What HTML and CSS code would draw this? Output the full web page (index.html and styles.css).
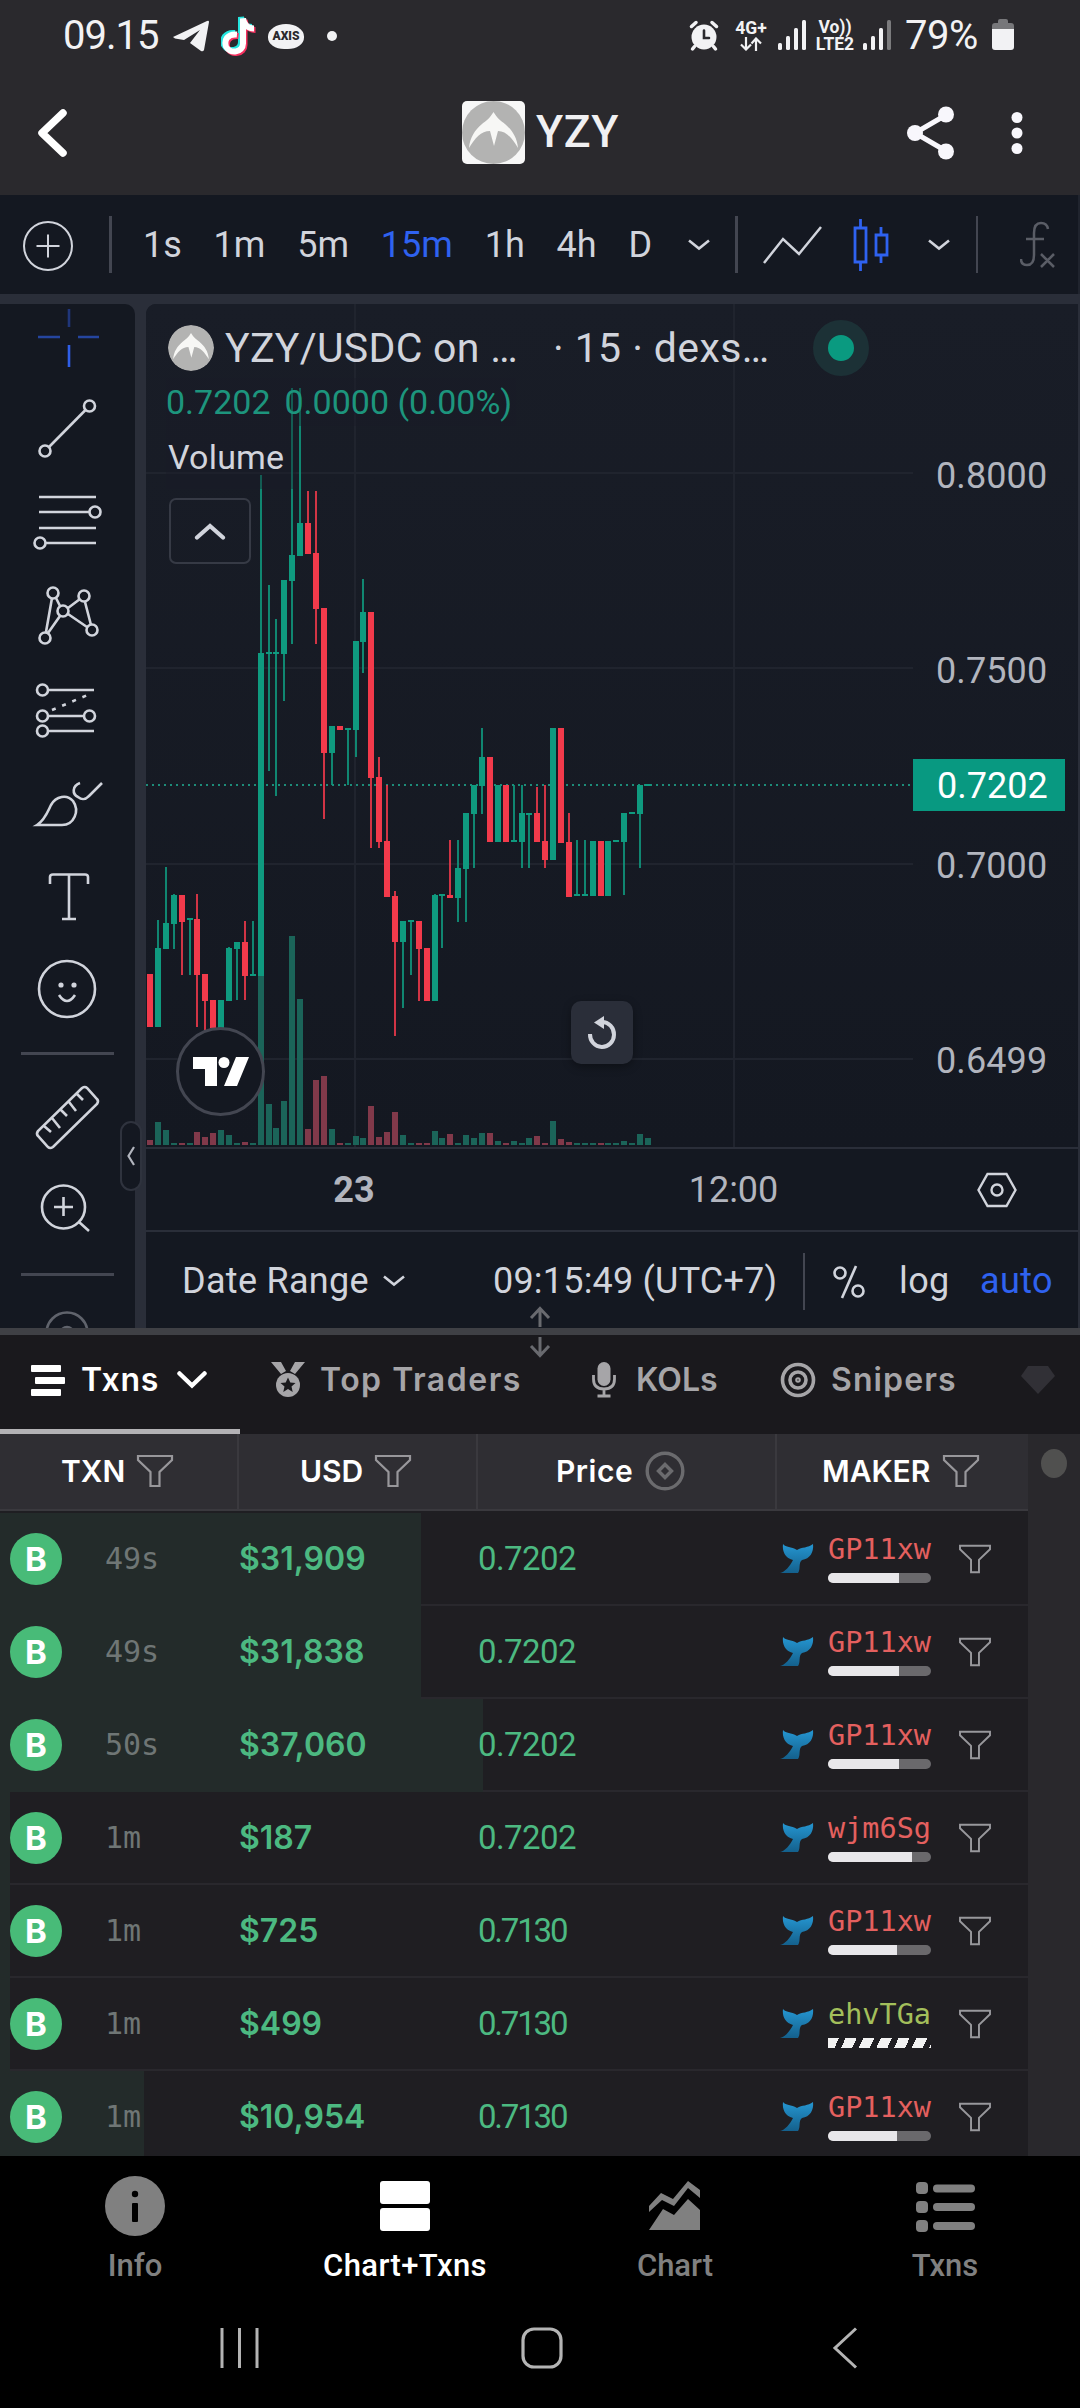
FILE: index.html
```html
<!DOCTYPE html>
<html lang="en">

<head>
    <meta charset="UTF-8">
    <meta name="viewport" content="width=device-width, initial-scale=1.0">
    <title>YZY</title>
    <link rel="stylesheet" href="styles.css">
</head>

<body>
    <!-- shared icons -->
    <svg class="defs" width="0" height="0">
        <symbol id="funnel" viewBox="0 0 38 34">
            <path d="M2 2h34v4L23.500 18v14h-9V18L2 6z" fill="none" stroke="currentColor" stroke-width="2.200" />
        </symbol>
        <symbol id="whale" viewBox="0 0 34 29">
            <path d="M3 0C6 4 11 2 17 6C22 3 28 4 33 0C34 8 30 15 22 16C18 19 21 25 18 29H0C5 28 10 22 13 16C5 14 2 7 3 0z" fill="url(#sea)" />
        </symbol>
        <symbol id="down" viewBox="0 0 22 12">
            <path d="M1 1.500L11 9.500L21 1.500" fill="none" stroke="currentColor" stroke-width="2.600" />
        </symbol>
        <symbol id="coin" viewBox="0 0 63 63">
            <circle cx="31.500" cy="31.500" r="31.500" fill="#b3b3b2" />
            <path d="M31.500 11C35 17 39 20 43 23C50 29 55 36 56 47C50 37 44 30 36 30L32 45L28 30C19 30 13 37 7 47C8 36 13 29 20 23C24 20 28 17 31.500 11z" fill="#f7f7f5" />
        </symbol>
        <linearGradient id="sea" x1="0" y1="0" x2="0" y2="1">
            <stop offset="0" stop-color="#2596d1" />
            <stop offset="1" stop-color="#14608c" />
        </linearGradient>
    </svg>

    <div class="status">
        <span class="clock">09.15</span>
        <svg class="tg" width="36" height="32" viewBox="0 0 36 32"><path d="M0 17L34 1Q36 0 36 2L31 30Q30 32 28 31L17 23L27 10L11 20L2 18.500z" fill="#f2f2f4" /></svg>
        <svg class="tiktok" width="36" height="40" viewBox="0 0 36 40" fill="none" stroke-width="6">
            <path d="M15 18C5 17 2 24 4 30C8 38 21 36 21 27V2C22 9 27 12 32 12" stroke="#25e5df" transform="translate(-1 -1)" />
            <path d="M15 18C5 17 2 24 4 30C8 38 21 36 21 27V2C22 9 27 12 32 12" stroke="#f5305f" transform="translate(2.500 2)" />
            <path d="M15 18C5 17 2 24 4 30C8 38 21 36 21 27V2C22 9 27 12 32 12" stroke="#fff" transform="translate(1 .5)" />
        </svg>
        <span class="bubble">AXIS</span>
        <i class="dot"></i>
        <svg class="alarm" width="30" height="32" viewBox="0 0 30 32" stroke="#f2f2f4" stroke-width="3.500" stroke-linecap="round">
            <circle cx="15" cy="17" r="12.500" fill="#f2f2f4" stroke="none" />
            <path d="M2.500 6.500L7 2.500M27.500 6.500L23 2.500M5.500 26.500L3.500 29M24.500 26.500L26.500 29" />
            <path d="M15 10.500V18H20" fill="none" stroke="#2a292d" stroke-width="2.600" />
        </svg>
        <span class="net net-4g">4G+
            <svg width="22" height="14" viewBox="0 0 22 14" fill="none" stroke="#f2f2f4" stroke-width="2.200"><path d="M6 0V12M1 7.500L6 12.500L11 7.500M16 14V2M11.500 6.500L16 1.500L21 6.500" /></svg>
        </span>
        <svg class="bars" width="29" height="30" viewBox="0 0 29 30" fill="#f2f2f4"><rect y="23" width="4" height="7" rx="1.500" /><rect x="8" y="16" width="4" height="14" rx="1.500" /><rect x="16" y="8" width="4" height="22" rx="1.500" /><rect x="24" y="0" width="4" height="30" rx="1.500" /></svg>
        <span class="net net-lte"><span>Vo))</span><span>LTE2</span></span>
        <svg class="bars" width="29" height="30" viewBox="0 0 29 30" fill="#f2f2f4"><rect y="23" width="4" height="7" rx="1.500" /><rect x="8" y="16" width="4" height="14" rx="1.500" /><rect x="16" y="8" width="4" height="22" rx="1.500" /><rect x="24" y="0" width="4" height="30" rx="1.500" fill="#7b7b7d" /></svg>
        <span class="percent">79%</span>
        <svg class="battery" width="22" height="32" viewBox="0 0 22 32"><path d="M0 11V7Q0 4 3 4H6V2Q6 0 8 0H14Q16 0 16 2V4H19Q22 4 22 7V11z" fill="#77777a" /><path d="M0 10H22V28Q22 31 19 31H3Q0 31 0 28z" fill="#f2f2f4" /></svg>
    </div>

    <header class="topbar">
        <svg class="back" width="32" height="50" viewBox="0 0 32 50"><path d="M27 5L6 25L27 45" fill="none" stroke="#fff" stroke-width="7.500" stroke-linecap="round" stroke-linejoin="round" /></svg>
        <div class="token">
            <svg width="63" height="63"><use href="#coin" /></svg>
            <h1>YZY</h1>
        </div>
        <svg class="share" width="48" height="54" viewBox="0 0 48 54"><path d="M39 9L8 27L39 45" fill="none" stroke="#f8f7fc" stroke-width="5" /><g fill="#f8f7fc"><circle cx="39" cy="8.500" r="8" /><circle cx="8" cy="27" r="8" /><circle cx="39" cy="45.500" r="8" /></g></svg>
        <svg class="more" width="12" height="44" viewBox="0 0 12 44" fill="#f8f7fc"><circle cx="6" cy="6.500" r="5.500" /><circle cx="6" cy="22" r="5.500" /><circle cx="6" cy="37.500" r="5.500" /></svg>
    </header>

    <nav class="toolbar">
        <svg class="plus" width="50" height="50" viewBox="0 0 50 50" fill="none" stroke="#d1d4dc" stroke-width="2"><circle cx="25" cy="25" r="24" /><path d="M13.500 25H36.500M25 13.500V36.500" /></svg>
        <i class="sep sep-a"></i>
        <div class="intervals">
            <span>1s</span>
            <span>1m</span>
            <span>5m</span>
            <span class="on">15m</span>
            <span>1h</span>
            <span>4h</span>
            <span>D</span>
        </div>
        <svg class="chev" width="22" height="12"><use href="#down" /></svg>
        <i class="sep sep-b"></i>
        <svg class="line-type" width="60" height="40" viewBox="0 0 60 40"><path d="M2 38L21 14L37 29L59 2" fill="none" stroke="#d1d4dc" stroke-width="2.500" /></svg>
        <svg class="candle-type" width="36" height="54" viewBox="0 0 36 54" fill="none" stroke="#2f62f0" stroke-width="2.800"><path d="M7.500 1V10M7.500 45V53M28 9V17M28 37V45" /><path d="M2 10H13V44H2zM23 17H34V37H23z" /></svg>
        <svg class="chev" width="22" height="12"><use href="#down" /></svg>
        <i class="sep sep-c"></i>
        <svg class="fx" width="36" height="48" viewBox="0 0 36 48" fill="none" stroke="#5a5d66" stroke-width="2.500"><path d="M28 8Q27 2 21 2Q14 2 14 12V34Q14 44 7 44Q1 44 1 38M6 18H24M21 33L34 46M34 33L21 46" /></svg>
    </nav>

    <main class="workspace">
        <aside class="tools">
            <svg class="cross" width="135" height="93" viewBox="0 290 135 93"><path class="mid" d="M38 337H60M78 337H99" /><path class="low" d="M69 309V327" /><path d="M69 345V367" /></svg>
            <svg width="135" height="93" viewBox="0 383 135 93"><path d="M49 447L85.500 410" /><circle cx="89.500" cy="406" r="5.500" /><circle cx="45" cy="451" r="5.500" /></svg>
            <svg width="135" height="93" viewBox="0 476 135 93"><path d="M39 497H96M39 512H89M39 528H96M46 543H96" /><circle cx="95" cy="512" r="5.500" /><circle cx="40" cy="543" r="5.500" /></svg>
            <svg width="135" height="93" viewBox="0 569 135 93"><path d="M52 598L46 632M48 633L60 616M56 598L60 606M68 608L80 599M85 602L91 625M68 614L87 627" /><circle cx="53" cy="593" r="5.500" /><circle cx="84" cy="596" r="5.500" /><circle cx="63" cy="611" r="5.500" /><circle cx="45" cy="638" r="5.500" /><circle cx="92" cy="630" r="5.500" /></svg>
            <svg width="135" height="93" viewBox="0 662 135 93"><path d="M48 690H94M48 716H84M48 731H94" /><path d="M52 710L90 694" stroke-dasharray="4 7" /><circle cx="42.500" cy="690" r="5.500" /><circle cx="42.500" cy="716" r="5.500" /><circle cx="89.500" cy="716" r="5.500" /><circle cx="42.500" cy="731" r="5.500" /></svg>
            <svg width="135" height="93" viewBox="0 755 135 93"><path d="M37 825C45 820 48 811 51 805C56 796 67 794 73 801C80 811 74 825 62 825zM80 783C72 786 72 794 78 797C83 801 86 799 89 796L102 783" /></svg>
            <svg width="135" height="93" viewBox="0 848 135 93"><path d="M50 884V877Q50 874.500 53 874.500H85Q88 874.500 88 877V884M69 875V919M62 919H76" /></svg>
            <svg width="135" height="93" viewBox="0 941 135 93"><circle cx="67" cy="989" r="28" /><path d="M59 995Q67 1007 75 995" /><g class="fill"><circle cx="61" cy="985" r="2.600" /><circle cx="74" cy="985" r="2.600" /></g></svg>
            <i class="rule"></i>
            <svg width="135" height="90" viewBox="0 1072 135 90"><path d="M38 1131Q36 1134 38 1136L48 1147Q50 1149 53 1147L97 1104Q99 1101 97 1099L87 1088Q85 1086 82 1088zM44 1126L51 1132M52 1118L60 1128M61 1110L67 1116M69 1102L76 1111M77 1094L83 1100" /></svg>
            <svg width="135" height="90" viewBox="0 1162 135 90"><circle cx="63.500" cy="1207" r="21.500" /><path d="M54 1207H73M63.500 1197V1216M79 1222L89 1231" /></svg>
            <i class="rule rule-2"></i>
            <svg class="dim" width="135" height="52" viewBox="0 1276 135 52"><circle cx="67" cy="1333" r="20.500" /><circle cx="67" cy="1333" r="6" /></svg>
        </aside>
        <div class="tools-toggle"><svg width="8" height="20" viewBox="0 0 8 20"><path d="M7 1L1.500 10L7 19" fill="none" stroke="#b2b5be" stroke-width="2.200" /></svg></div>

        <section class="chart">
            <div class="pane">
                <div class="plot">
                    <svg id="candles" width="767" height="843" viewBox="146 304 767 843"></svg>
                    <div class="legend">
                        <div class="pair">
                            <svg width="46" height="46"><use href="#coin" /></svg>
                            <span class="pair-name">YZY/USDC on …</span>
                            <span class="pair-src">· 15 · dexs…</span>
                            <i class="live"></i>
                        </div>
                        <div class="ohlc"><span>0.7202</span><span>0.0000 (0.00%)</span></div>
                        <div class="vol">Volume</div>
                        <div class="fold"><svg width="32" height="18" viewBox="0 0 32 18"><path d="M3 15.500L16 4L29 15.500" fill="none" stroke="#d1d4dc" stroke-width="4.200" stroke-linecap="round" /></svg></div>
                    </div>
                    <div class="tv"><svg width="56" height="30" viewBox="0 0 56 30" fill="#fff"><path d="M0 0H24V29H12V12H0zM43 0H56L44 29H31z" /><circle cx="31" cy="5.500" r="5.500" /></svg></div>
                    <div class="reset"><svg width="30" height="34" viewBox="0 0 30 34"><path d="M3 18A12 12.500 0 1 0 15 6" fill="none" stroke="#d1d4dc" stroke-width="4" /><path d="M17 0V13L7 6.500z" fill="#d1d4dc" /></svg></div>
                </div>
                <div class="price-axis">
                    <span>0.8000</span>
                    <span>0.7500</span>
                    <span>0.7000</span>
                    <span>0.6499</span>
                    <b class="last">0.7202</b>
                </div>
            </div>
            <div class="time-axis">
                <b>23</b>
                <span>12:00</span>
                <svg width="40" height="36" viewBox="0 0 40 36" fill="none" stroke="#d1d4dc" stroke-width="2.400"><path d="M10.500 2H29.500L38.500 18L29.500 34H10.500L1.500 18z" /><circle cx="20" cy="18" r="5.500" /></svg>
            </div>
            <div class="chart-foot">
                <span class="range">Date Range</span>
                <svg width="22" height="12"><use href="#down" /></svg>
                <span class="utc">09:15:49 (UTC+7)</span>
                <i class="sep"></i>
                <svg class="pct" width="32" height="34" viewBox="0 0 32 34" fill="none" stroke="#d1d4dc" stroke-width="2.600"><circle cx="7" cy="8" r="5.500" /><circle cx="25" cy="26" r="5.500" /><path d="M23 1L9 33" /></svg>
                <span class="log">log</span>
                <span class="auto">auto</span>
            </div>
        </section>
    </main>

    <div class="splitter">
        <svg width="22" height="52" viewBox="0 0 22 52" fill="none" stroke="#696a6f" stroke-width="3"><path d="M11 21V2M2 12L11 2.500L20 12M11 31V50M2 40L11 49.500L20 40" /></svg>
    </div>

    <nav class="tabs">
        <div class="tab active">
            <svg width="34" height="31" viewBox="0 0 34 31" fill="#fff"><rect width="30" height="7" rx="1" /><rect x="4" y="12" width="30" height="7" rx="1" /><rect y="24" width="30" height="7" rx="1" /></svg>
            <span>Txns</span>
            <svg class="tab-chev" width="30" height="20" viewBox="0 0 30 20"><path d="M2.500 3.500L15 15.500L27.500 3.500" fill="none" stroke="#fff" stroke-width="4.500" stroke-linecap="round" /></svg>
        </div>
        <div class="tab t-top">
            <svg width="34" height="36" viewBox="0 0 34 36" fill="#a6a5a8"><path d="M0 0H10L15 9L10 12zM34 0H24L19 9L24 12z" /><circle cx="17" cy="23" r="12" /><path d="M17 15.500L19.300 20.500L24.500 21L20.500 24.500L21.700 30L17 27L12.300 30L13.500 24.500L9.500 21L14.700 20.500z" fill="#1a191d" /></svg>
            <span>Top Traders</span>
        </div>
        <div class="tab t-kol">
            <svg width="24" height="36" viewBox="0 0 24 36"><rect x="5.500" width="13" height="24" rx="6.500" fill="#a6a5a8" /><path d="M1.500 13V17Q1.500 27 12 27Q22.500 27 22.500 17V13M12 27V33M5.500 34H18.500" fill="none" stroke="#a6a5a8" stroke-width="2.800" /></svg>
            <span>KOLs</span>
        </div>
        <div class="tab t-snipe">
            <svg width="36" height="36" viewBox="0 0 36 36" fill="none" stroke="#a6a5a8" stroke-width="3.600"><circle cx="18" cy="18" r="15.500" /><circle cx="18" cy="18" r="8" /><circle cx="18" cy="18" r="1" /></svg>
            <span>Snipers</span>
        </div>
        <svg class="gem" width="34" height="28" viewBox="0 0 34 28"><path d="M7 0H27L34 10L17 28L0 10z" fill="#313036" /></svg>
    </nav>

    <section class="txns">
        <div class="table">
            <div class="thead">
                <div>TXN<svg width="38" height="34"><use href="#funnel" /></svg></div>
                <div class="h-usd">USD<svg width="38" height="34"><use href="#funnel" /></svg></div>
                <div class="h-price">Price<svg width="40" height="40" viewBox="0 0 40 40" fill="none" stroke="#6b6b6e" stroke-width="3.400"><circle cx="20" cy="20" r="17.800" /><path d="M20 13.500L26.500 20L20 26.500L13.500 20z" /></svg></div>
                <div class="h-maker">MAKER<svg width="38" height="34"><use href="#funnel" /></svg></div>
            </div>
            <div id="rows"></div>
        </div>
        <div class="scroll"><i></i></div>
    </section>

    <footer class="bottom-nav">
        <div>
            <svg width="60" height="60" viewBox="0 0 60 60"><circle cx="30" cy="30" r="30" fill="#808080" /><g fill="#000"><circle cx="30" cy="18" r="3.200" /><rect x="27" y="27" width="6" height="19" rx="1" /></g></svg>
            <span>Info</span>
        </div>
        <div class="current">
            <svg width="60" height="60" viewBox="0 0 60 60" fill="#fff"><rect x="5" y="5" width="50" height="23" rx="3" /><rect x="5" y="32" width="50" height="23" rx="3" /></svg>
            <span>Chart+Txns</span>
        </div>
        <div>
            <svg width="60" height="60" viewBox="0 0 60 60" fill="#808080"><path d="M4 30L16 17L28 23L43 5L55 14V22L43 12L29 30L17 24L4 36zM4 54L18 33L29 39L43 23L55 34V54z" /></svg>
            <span>Chart</span>
        </div>
        <div>
            <svg width="60" height="60" viewBox="0 0 60 60" fill="#808080"><rect x="1" y="6" width="12" height="12" rx="4" /><rect x="1" y="25" width="12" height="12" rx="4" /><rect x="1" y="44" width="12" height="12" rx="4" /><rect x="18" y="8.500" width="42" height="8" rx="4" /><rect x="18" y="27" width="42" height="8" rx="4" /><rect x="18" y="46" width="42" height="8" rx="4" /></svg>
            <span>Txns</span>
        </div>
    </footer>

    <div class="sys-nav">
        <svg width="40" height="42" viewBox="0 0 40 42" stroke="#b4b4b4" stroke-width="3"><path d="M3 1V41M20.500 1V41M38 1V41" /></svg>
        <svg width="42" height="42" viewBox="0 0 42 42"><rect x="2" y="2" width="38" height="38" rx="11" fill="none" stroke="#b4b4b4" stroke-width="3.200" /></svg>
        <svg width="26" height="42" viewBox="0 0 26 42"><path d="M24 1.500L3 21L24 40.500" fill="none" stroke="#b4b4b4" stroke-width="3" /></svg>
    </div>

    <script src="script.js"></script>
</body>

</html>
```
FILE: styles.css
```css
* {
    box-sizing: border-box;
}

body {
    margin: 0;
    width: 1080px;
    height: 2408px;
    overflow: hidden;
    background-color: #000;
    color: #d1d4dc;
    font-family: Roboto, "Liberation Sans", sans-serif;
    font-size: 36px;
    line-height: 1;
}

svg {
    display: block;
    flex: none;
}

span, b {
    white-space: nowrap;
}

.defs {
    position: absolute;
}

/* status bar */
.status {
    display: flex;
    align-items: center;
    height: 72px;
    padding-left: 63px;
    background-color: #2a292d;
    color: #f2f2f4;
}

.clock {
    width: 110px;
    font-size: 40px;
    letter-spacing: -1px;
}

.tiktok {
    margin-left: 12px;
}

.bubble {
    width: 36px;
    height: 25px;
    margin-left: 11px;
    border-radius: 50% 50% 45% 45%;
    background-color: #f2f2f4;
    color: #2a292d;
    font-size: 12px;
    font-weight: 900;
    line-height: 25px;
    text-align: center;
}

.dot {
    width: 10px;
    height: 10px;
    margin-left: 23px;
    border-radius: 50%;
    background-color: #f2f2f4;
}

.alarm {
    margin-left: 352px;
}

.net {
    display: flex;
    flex-direction: column;
    align-items: center;
    font-size: 17.500px;
    font-weight: 700;
    line-height: 15px;
}

.net-4g {
    width: 32px;
    margin-left: 16px;
    gap: 1px;
}

.net-lte {
    width: 42px;
    margin: 0 7px;
    gap: 2px;
}

.bars {
    margin-top: -2px;
}

.net-4g + .bars {
    margin-left: 11px;
}

.percent {
    width: 87px;
    margin-left: 13px;
    font-size: 40px;
    letter-spacing: -.5px;
}

.battery {
    margin-top: -2px;
}

/* token header */
.topbar {
    display: flex;
    align-items: center;
    height: 123px;
    padding: 0 57px 0 36px;
    background-color: #2a292d;
}

.topbar > svg {
    margin-top: -1px;
}

.token {
    display: flex;
    align-items: center;
    gap: 11px;
    margin-left: 394px;
    padding-bottom: 2px;
}

.token svg {
    border-radius: 5px;
    background-color: #f7f7f7;
}

.token h1 {
    margin: 0;
    font-size: 44.500px;
    font-weight: 500;
    letter-spacing: .6px;
    color: #f0f0f2;
}

.share {
    margin-left: auto;
    margin-right: 56px;
}

/* interval toolbar */
.toolbar {
    display: flex;
    align-items: center;
    height: 99px;
    padding-left: 23px;
    background-color: #141821;
    border-right: 2px solid #20242e;
}

.plus {
    margin-top: 3px;
}

.sep {
    flex: none;
    width: 3px;
    height: 57px;
    background-color: #434651;
}

.sep-a {
    margin: 0 31px 0 36px;
}

.intervals {
    display: flex;
    gap: 31.800px;
    width: 545px;
}

.intervals .on {
    color: #2f62f0;
}

.sep-b {
    margin: 0 24px 0 25px;
}

.candle-type {
    margin: 0 39px 0 31px;
}

.sep-c {
    width: 2px;
    margin: 0 42px 0 26px;
}

/* chart workspace */
.workspace {
    position: relative;
    display: flex;
    height: 1034px;
    padding: 10px 2px 0 0;
    gap: 11px;
    background-color: #2a2e39;
}

.tools {
    flex: none;
    width: 135px;
    overflow: hidden;
    border-radius: 0 10px 0 0;
    background-color: #141821;
}

.tools svg {
    fill: none;
    stroke: #d1d4dc;
    stroke-width: 2.600;
}

.tools svg:first-child {
    margin-top: -14px;
}

.tools .cross {
    stroke: #2f5fe8;
}

.cross .mid {
    stroke: #25459f;
}

.cross .low {
    stroke: #20367a;
}

.tools .fill {
    fill: #d1d4dc;
    stroke: none;
}

.tools .dim {
    opacity: .4;
}

.rule {
    display: block;
    width: 93px;
    height: 3px;
    margin: 18px 0 17px 21px;
    background-color: #434651;
}

.rule-2 {
    margin: 21px 0 0 21px;
}

.tools-toggle {
    position: absolute;
    left: 120px;
    top: 827px;
    display: flex;
    align-items: center;
    justify-content: center;
    width: 22px;
    height: 70px;
    border: 2px solid #2f333e;
    border-radius: 11px;
    background-color: #141821;
}

.chart {
    display: flex;
    flex-direction: column;
    width: 932px;
    border-radius: 10px 0 0 0;
    overflow: hidden;
    background-color: #141821;
}

.pane {
    display: flex;
    height: 843px;
    background: linear-gradient(#191d27, #141821);
}

.plot {
    position: relative;
    width: 767px;
}

.legend {
    position: absolute;
    left: 0;
    top: 0;
    padding: 14px 0 0 20px;
}

.pair {
    display: flex;
    align-items: center;
    height: 60px;
    padding-left: 2px;
    font-size: 41px;
}

.pair svg {
    border-radius: 50%;
}

.pair-name {
    width: 328px;
    margin-left: 11px;
    letter-spacing: .3px;
}

.pair-src {
    width: 228px;
    letter-spacing: .4px;
}

.live {
    width: 56px;
    height: 56px;
    margin-left: 32px;
    border: 15px solid #1c3136;
    border-radius: 50%;
    background-color: #0a9a80;
}

.ohlc {
    display: flex;
    align-items: center;
    gap: 14px;
    width: 350px;
    height: 48px;
    font-size: 34px;
    color: #1d957d;
    background-color: rgba(24, 28, 39, .4);
}

.vol {
    display: flex;
    align-items: center;
    width: 130px;
    height: 63px;
    padding: 0 0 1px 2px;
    font-size: 34px;
    letter-spacing: .2px;
    background-color: rgba(24, 28, 39, .4);
}

.fold {
    display: flex;
    align-items: center;
    justify-content: center;
    width: 82px;
    height: 66px;
    margin: 9px 0 0 3px;
    border: 2px solid #363a45;
    border-radius: 7px;
}

.tv {
    position: absolute;
    left: 30px;
    top: 723px;
    display: flex;
    align-items: center;
    justify-content: center;
    width: 89px;
    height: 89px;
    border: 3px solid #434651;
    border-radius: 50%;
    background-color: #141821;
}

.reset {
    position: absolute;
    left: 425px;
    top: 697px;
    display: flex;
    align-items: center;
    justify-content: center;
    width: 62px;
    height: 63px;
    border-radius: 10px;
    background-color: #2a2e39;
    box-shadow: 0 3px 8px rgba(0, 0, 0, .35);
}

.price-axis {
    position: relative;
    display: flex;
    flex-direction: column;
    width: 165px;
    padding-top: 74px;
    color: #b2b5be;
}

.price-axis span {
    height: 195px;
    padding-left: 23px;
    line-height: 196px;
    letter-spacing: .1px;
}

.last {
    position: absolute;
    left: 0;
    top: 455px;
    width: 152px;
    height: 52px;
    padding-left: 24px;
    background-color: #089981;
    color: #fff;
    font-weight: 400;
    line-height: 54px;
}

.time-axis {
    display: flex;
    align-items: center;
    height: 83px;
    border-top: 2px solid #2a2e39;
    color: #b2b5be;
    text-align: center;
}

.time-axis b {
    width: 416px;
}

.time-axis span {
    width: 343px;
}

.time-axis svg {
    margin: 1px 0 0 72px;
}

.chart-foot {
    display: flex;
    align-items: center;
    flex: 1;
    padding: 2px 0 0 36px;
    border-top: 2px solid #2a2e39;
}

.range {
    width: 201px;
    letter-spacing: .3px;
}

.utc {
    width: 398px;
    padding-left: 88px;
    letter-spacing: .2px;
}

.chart-foot .sep {
    width: 2px;
}

.pct {
    margin: 1px 34px 0 28px;
}

.log {
    width: 81px;
    letter-spacing: .4px;
}

.auto {
    color: #2f62f0;
    letter-spacing: .4px;
}

.splitter {
    position: relative;
    height: 7px;
    background-color: #3f4045;
}

.splitter svg {
    position: absolute;
    left: 529px;
    top: -22px;
}

/* tabs */
.tabs {
    display: flex;
    height: 99px;
    background-color: #1a191d;
    color: #a6a5a8;
    font-family: Inter, "Open Sans", sans-serif;
    font-size: 32px;
    font-weight: 600;
}

.tab {
    display: flex;
    align-items: center;
    height: 99px;
    padding-bottom: 9px;
}

.active {
    width: 240px;
    padding: 0 0 4px 31px;
    border-bottom: 5px solid #b3b2b5;
    color: #fff;
}

.active span {
    width: 96px;
    margin-left: 16px;
    letter-spacing: .7px;
}

.t-top {
    width: 352px;
    padding-left: 31px;
}

.t-top span {
    margin-left: 15px;
    letter-spacing: 1.500px;
}

.t-kol {
    width: 188px;
}

.t-kol span {
    margin-left: 20px;
}

.t-snipe {
    width: 241px;
}

.t-snipe span {
    margin-left: 15px;
    letter-spacing: 1.100px;
}

.gem {
    margin-top: 31px;
}

/* transactions table */
.txns {
    display: flex;
    height: 722px;
    overflow: hidden;
    background-color: #29282c;
}

.table {
    flex: none;
    width: 1028px;
    background-color: #1f1e22;
    font-family: Inter, "Open Sans", sans-serif;
}

.thead {
    display: grid;
    grid-template-columns: 239px 239px 299px 251px;
    height: 77px;
    background-color: #2f2e33;
    border-bottom: 2px solid #3a393e;
    color: #fff;
    font-size: 30px;
    font-weight: 600;
}

.thead div {
    display: flex;
    align-items: center;
    padding: 0 0 2px 61px;
    gap: 11px;
    border-right: 2px solid #3a393e;
}

.thead div:last-child {
    border-right: 0;
}

.thead svg {
    color: #98979b;
}

.thead .h-price {
    padding-left: 78px;
    gap: 12px;
    letter-spacing: .5px;
}

.thead .h-maker {
    padding-left: 45px;
    gap: 12px;
}

.row {
    position: relative;
    display: grid;
    grid-template-columns: 105px 133px 240px 302px 48px 104px 1fr;
    align-items: center;
    height: 93px;
    border-bottom: 2px solid #29282d;
    color: #4cb981;
}

.row:first-child {
    height: 95px;
    padding-top: 2px;
}

/* trade size fill behind the row */
.fill-bar {
    position: absolute;
    left: 0;
    top: 0;
    height: 93px;
    background-color: #232b2a;
}

.row:first-child .fill-bar {
    top: 2px;
}

.row > * {
    position: relative;
}

.row > .fill-bar {
    position: absolute;
}

.side {
    width: 52px;
    height: 52px;
    margin-left: 10px;
    border-radius: 50%;
    background-color: #48bb78;
    color: #fff;
    font-size: 33px;
    font-weight: 700;
    line-height: 52px;
    text-align: center;
}

.age, .maker {
    font-family: "DejaVu Sans Mono", monospace;
}

.age {
    font-size: 30px;
    color: #6f7675;
}

.usd {
    font-size: 32px;
    font-weight: 600;
    padding-left: 1px;
}

.price {
    font-family: Roboto, sans-serif;
    font-size: 33px;
    letter-spacing: -.6px;
}

.price.narrow {
    letter-spacing: -2.200px;
}

.maker {
    display: flex;
    flex-direction: column;
    gap: 8px;
    padding-top: 2px;
    font-size: 28.500px;
    color: #e4605f;
}

.maker.alt {
    color: #a3bf5b;
}

.meter {
    width: 103px;
    height: 10px;
    border-radius: 5px;
    overflow: hidden;
    background-color: #6a696c;
}

.meter i {
    display: block;
    height: 10px;
    background-color: #e8e7ea;
}

.meter.striped {
    border-radius: 0;
    background: repeating-linear-gradient(115deg, #f2f2f2 0 10px, #1f1e22 10px 16px);
}

.row .sieve {
    margin: 0 0 0 26px;
    color: #98989c;
}

.scroll i {
    display: block;
    width: 26px;
    height: 29px;
    margin: 15px 0 0 13px;
    border-radius: 50%;
    background-color: #50504f;
}

/* bottom navigation */
.bottom-nav {
    display: grid;
    grid-template-columns: repeat(4, 1fr);
    height: 140px;
    padding-top: 20px;
    color: #808080;
    font-size: 31px;
    font-weight: 500;
}

.bottom-nav div {
    display: flex;
    flex-direction: column;
    align-items: center;
    gap: 14px;
}

.bottom-nav .current {
    color: #fff;
    letter-spacing: .4px;
}

.sys-nav {
    display: flex;
    height: 112px;
    padding: 31px 0 0 219px;
}

.sys-nav svg + svg {
    margin-left: 262px;
}

.sys-nav svg:last-child {
    margin-left: 269px;
}
```
FILE: script.js
```js
const NS = "http://www.w3.org/2000/svg";
const UP = "#0f9a7f";
const DOWN = "#f23a4b";
const VOL_UP = "#1b6459";
const VOL_DOWN = "#81394a";

// [direction, high, body top, body bottom, low, volume top], all in pane pixels
const bars = [
    ["r", 974, 974, 1027, 1027, 1140], ["g", 920, 948, 1027, 1027, 1122],
    ["g", 867, 923, 949, 949, 1130], ["g", 894, 895, 924, 949, 1143],
    ["r", 895, 895, 922, 975, 1143], ["g", 918, 918, 920, 975, 1143],
    ["r", 894, 919, 975, 1027, 1132], ["r", 974, 974, 1001, 1030, 1137],
    ["r", 1000, 1000, 1028, 1028, 1133], ["g", 1000, 1000, 1028, 1028, 1130],
    ["g", 947, 948, 1001, 1001, 1135], ["g", 942, 942, 949, 1000, 1143],
    ["r", 921, 942, 976, 1000, 1142], ["g", 921, 974, 976, 976, 1143],
    ["g", 475, 653, 976, 976, 976], ["g", 585, 652, 654, 771, 1104],
    ["g", 619, 652, 654, 796, 1128], ["g", 580, 580, 654, 701, 1101],
    ["g", 388, 555, 581, 644, 936], ["g", 388, 523, 556, 556, 999],
    ["r", 491, 523, 554, 554, 1129], ["r", 491, 553, 609, 644, 1080],
    ["r", 608, 608, 753, 819, 1076], ["g", 726, 726, 753, 785, 1129],
    ["r", 726, 726, 730, 730, 1143], ["g", 728, 728, 730, 785, 1143],
    ["g", 641, 641, 730, 757, 1136], ["g", 579, 612, 642, 673, 1138],
    ["r", 612, 612, 778, 848, 1106], ["r", 757, 777, 842, 848, 1137],
    ["r", 785, 841, 897, 897, 1132], ["r", 891, 896, 942, 1036, 1112],
    ["g", 921, 921, 942, 1008, 1135], ["g", 920, 920, 922, 975, 1143],
    ["r", 921, 921, 949, 1001, 1143], ["r", 948, 948, 1001, 1001, 1143],
    ["g", 894, 895, 1001, 1001, 1131], ["g", 894, 894, 896, 948, 1138],
    ["r", 840, 895, 898, 898, 1134], ["g", 840, 868, 898, 922, 1143],
    ["g", 813, 813, 869, 922, 1135], ["g", 785, 785, 814, 868, 1138],
    ["g", 728, 757, 786, 814, 1133], ["r", 757, 757, 842, 842, 1133],
    ["g", 785, 785, 842, 842, 1141], ["r", 785, 785, 842, 842, 1143],
    ["g", 785, 840, 842, 842, 1141], ["g", 785, 813, 842, 868, 1143],
    ["g", 813, 813, 815, 868, 1138], ["r", 787, 813, 842, 842, 1136],
    ["r", 785, 841, 860, 868, 1143], ["g", 728, 728, 860, 860, 1121],
    ["r", 728, 728, 843, 843, 1139], ["r", 813, 842, 897, 897, 1142],
    ["g", 840, 894, 896, 896, 1143], ["g", 840, 894, 896, 896, 1143],
    ["g", 841, 841, 896, 896, 1143], ["r", 841, 841, 896, 896, 1143],
    ["g", 841, 841, 896, 896, 1143], ["g", 840, 840, 842, 842, 1143],
    ["g", 813, 813, 842, 895, 1141], ["g", 812, 812, 814, 814, 1143],
    ["g", 785, 785, 814, 868, 1134], ["g", 784, 784, 786, 786, 1138]
];

const svg = document.querySelector("#candles");

function rect(x, y, w, h, fill, opacity) {
    const el = document.createElementNS(NS, "rect");
    el.setAttribute("x", x);
    el.setAttribute("y", y);
    el.setAttribute("width", w);
    el.setAttribute("height", h);
    el.setAttribute("fill", fill);
    if (opacity) el.setAttribute("opacity", opacity);
    svg.appendChild(el);
}

// grid
[472, 667, 863, 1058].forEach(y => rect(146, y, 767, 2, "#20242e"));
[354, 733].forEach(x => rect(x, 304, 2, 843, "#20242e"));

// last price line
for (let x = 146; x < 913; x += 6) {
    rect(x, 784, 2, 2, "#1d8c79");
}

bars.forEach(([dir, high, top, bottom, low, vol], i) => {
    const x = Math.round(150 + i * 7.905);
    const color = dir === "g" ? UP : DOWN;
    rect(x - 3, vol, 6, 1145 - vol, dir === "g" ? VOL_UP : VOL_DOWN);
    rect(x - 1, high, 2, low - high, color, .85);
    rect(x - 3, top, 6, bottom - top, color);
});

// transactions: age, usd, price, maker, meter %, fill width
const txns = [
    ["49s", "$31,909", "0.7202", "GP11xw", 69, 421],
    ["49s", "$31,838", "0.7202", "GP11xw", 69, 421],
    ["50s", "$37,060", "0.7202", "GP11xw", 69, 483],
    ["1m", "$187", "0.7202", "wjm6Sg", 82, 10],
    ["1m", "$725", "0.7130", "GP11xw", 67, 10],
    ["1m", "$499", "0.7130", "ehvTGa", null, 10],
    ["1m", "$10,954", "0.7130", "GP11xw", 67, 144]
];

document.querySelector("#rows").innerHTML = txns.map(([age, usd, price, maker, pct, fill]) => `
    <div class="row">
        <i class="fill-bar" style="width: ${fill}px"></i>
        <span class="side">B</span>
        <span class="age">${age}</span>
        <span class="usd">${usd}</span>
        <span class="price${price.includes("1") ? " narrow" : ""}">${price}</span>
        <svg class="whale" width="34" height="29"><use href="#whale" /></svg>
        <div class="maker${pct ? "" : " alt"}">
            <span>${maker}</span>
            <div class="meter${pct ? "" : " striped"}">${pct ? `<i style="width: ${pct}%"></i>` : ""}</div>
        </div>
        <svg class="sieve" width="34" height="30"><use href="#funnel" /></svg>
    </div>`).join("");
```
